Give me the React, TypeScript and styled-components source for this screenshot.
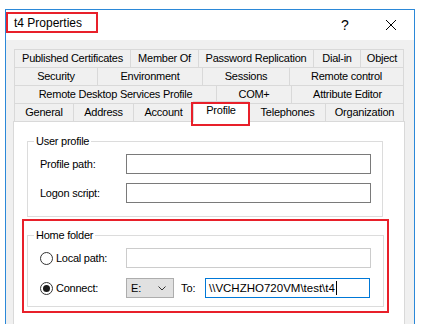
import React from 'react';
import styled, { createGlobalStyle } from 'styled-components';

const GlobalStyle = createGlobalStyle`
  html, body {
    margin: 0;
    padding: 0;
    background: #fff;
    overflow: hidden;
  }
  body {
    font-family: "Liberation Sans", Arial, sans-serif;
    font-size: 11px;
    color: #000;
  }
`;

const Page = styled.div`
  height: 324px;
  box-sizing: border-box;
  padding: 9px 0 0 5px;
  overflow: hidden;
`;

const Window = styled.div`
  width: 410px;
  height: 315px;
  box-sizing: border-box;
  border: 1px solid #2b88d8;
  border-bottom: none;
  background: #f0f0f0;
  display: flex;
  flex-direction: column;
`;

const TitleBar = styled.div`
  height: 30px;
  flex: none;
  background: #fff;
  display: flex;
  align-items: flex-start;
`;

const TitleBox = styled.div`
  margin-top: 2px;
  width: 92px;
  height: 21px;
  box-sizing: border-box;
  border: 2px solid #e8202a;
  padding: 1px 0 0 6px;
  font-size: 12px;
  line-height: 17px;
`;

const Spacer = styled.div`
  flex: 1;
`;

const TitleButton = styled.div`
  width: 46px;
  height: 30px;
  display: flex;
  align-items: center;
  justify-content: center;
  font-size: 14px;
`;

const Body = styled.div`
  flex: 1;
  min-height: 0;
  padding: 9px 9px 0 7px;
  display: flex;
  flex-direction: column;
`;

const TabRows = styled.div`
  margin: 0 1px;
  display: flex;
  flex-direction: column;
`;

const TabRow = styled.div`
  display: flex;
  height: 18px;
`;

const Tab = styled.div<{ $w: number; $selected?: boolean }>`
  width: ${(p) => p.$w}px;
  flex: none;
  box-sizing: border-box;
  height: ${(p) => (p.$selected ? 21 : 18)}px;
  margin-top: ${(p) => (p.$selected ? -2 : 0)}px;
  border-top: 1px solid #d9d9d9;
  border-left: 1px solid #d9d9d9;
  background: ${(p) => (p.$selected ? '#fff' : '#f0f0f0')};
  text-align: center;
  line-height: ${(p) => (p.$selected ? 16 : 17)}px;
  letter-spacing: -0.25px;
  white-space: nowrap;
  position: relative;
  z-index: ${(p) => (p.$selected ? 1 : 0)};
  &:last-child {
    border-right: 1px solid #d9d9d9;
  }
  ${(p) =>
    p.$selected &&
    `
    border-right: 1px solid #d9d9d9;
    &::after {
      content: '';
      position: absolute;
      top: 0;
      left: -3px;
      right: -2px;
      bottom: -4px;
      border: 2px solid #e8202a;
    }
  `}
`;

const Panel = styled.div`
  flex: 1;
  min-height: 0;
  background: #fff;
  border: 1px solid #d9d9d9;
  border-bottom: none;
  padding: 12px 21px 0 13px;
  display: flex;
  flex-direction: column;
`;

const Group = styled.fieldset`
  margin: 0;
  padding: 0;
  min-width: 0;
  border: 1px solid #dcdcdc;
`;

const Legend = styled.legend`
  margin-left: 6px;
  padding: 0 2px;
  line-height: 14px;
  letter-spacing: -0.25px;
`;

const GroupBody = styled.div<{ $gap: number; $bottom: number }>`
  padding: 6px 11px ${(p) => p.$bottom}px 12px;
  display: flex;
  flex-direction: column;
  gap: ${(p) => p.$gap}px;
`;

const Row = styled.div`
  display: flex;
  align-items: center;
  height: 20px;
`;

const Label = styled.div`
  width: 86px;
  flex: none;
  display: flex;
  align-items: center;
  letter-spacing: -0.25px;
`;

const TextBox = styled.div<{ $w: number; $state?: 'disabled' | 'focus' }>`
  width: ${(p) => p.$w}px;
  height: 20px;
  box-sizing: border-box;
  border: 1px solid
    ${(p) => (p.$state === 'disabled' ? '#cccccc' : p.$state === 'focus' ? '#0078d7' : '#7a7a7a')};
  background: #fff;
  padding-left: 3px;
  display: flex;
  align-items: center;
  font-size: 11.5px;
  white-space: nowrap;
`;

const Caret = styled.span`
  display: inline-block;
  width: 1px;
  height: 14px;
  background: #000;
  margin-left: 1px;
`;

const RedBox = styled.div`
  margin: 2px -6px 0 -5px;
  border: 2px solid #e8202a;
  padding: 7px 3px 4px 3px;
`;

const Radio = styled.span<{ $checked?: boolean }>`
  width: 13px;
  height: 13px;
  box-sizing: border-box;
  border-radius: 50%;
  border: 1px solid #333;
  background: #fff;
  margin-right: 3px;
  display: flex;
  align-items: center;
  justify-content: center;
  &::after {
    content: '';
    width: 7px;
    height: 7px;
    border-radius: 50%;
    background: ${(p) => (p.$checked ? '#1a1a1a' : 'transparent')};
  }
`;

const Combo = styled.div`
  width: 48px;
  height: 20px;
  box-sizing: border-box;
  border: 1px solid #adadad;
  background: #e1e1e1;
  display: flex;
  align-items: center;
  justify-content: space-between;
  padding: 0 7px 0 4px;
`;

const ToLabel = styled.div`
  margin-left: 7px;
  width: 24px;
`;

const tabRows: [string, number][][] = [
  [
    ['Published Certificates', 116],
    ['Member Of', 68],
    ['Password Replication', 115],
    ['Dial-in', 47],
    ['Object', 44],
  ],
  [
    ['Security', 83],
    ['Environment', 105],
    ['Sessions', 87],
    ['Remote control', 115],
  ],
  [
    ['Remote Desktop Services Profile', 202],
    ['COM+', 75],
    ['Attribute Editor', 113],
  ],
  [
    ['General', 59],
    ['Address', 60],
    ['Account', 60],
    ['Profile', 56],
    ['Telephones', 76],
    ['Organization', 79],
  ],
];

export default function App() {
  return (
    <Page>
      <GlobalStyle />
      <Window>
        <TitleBar>
          <TitleBox>t4 Properties</TitleBox>
          <Spacer />
          <TitleButton>?</TitleButton>
          <TitleButton>
            <svg width="10" height="10" viewBox="0 0 10 10">
              <path d="M0 0 L10 10 M10 0 L0 10" stroke="#000" strokeWidth="1" />
            </svg>
          </TitleButton>
        </TitleBar>
        <Body>
          <TabRows>
            {tabRows.map((row, i) => (
              <TabRow key={i}>
                {row.map(([name, w]) => (
                  <Tab key={name} $w={w} $selected={name === 'Profile'}>
                    {name}
                  </Tab>
                ))}
              </TabRow>
            ))}
          </TabRows>
          <Panel>
            <Group>
              <Legend>User profile</Legend>
              <GroupBody $gap={9} $bottom={13}>
                <Row>
                  <Label>Profile path:</Label>
                  <TextBox $w={245} />
                </Row>
                <Row>
                  <Label>Logon script:</Label>
                  <TextBox $w={245} />
                </Row>
              </GroupBody>
            </Group>
            <RedBox>
              <Group>
                <Legend>Home folder</Legend>
                <GroupBody $gap={10} $bottom={8}>
                  <Row>
                    <Label>
                      <Radio />
                      Local path:
                    </Label>
                    <TextBox $w={245} $state="disabled" />
                  </Row>
                  <Row>
                    <Label>
                      <Radio $checked />
                      Connect:
                    </Label>
                    <Combo>
                      E:
                      <svg width="8" height="5" viewBox="0 0 8 5">
                        <path d="M0.5 0.5 L4 4 L7.5 0.5" stroke="#333" strokeWidth="1" fill="none" />
                      </svg>
                    </Combo>
                    <ToLabel>To:</ToLabel>
                    <TextBox $w={165} $state="focus">
                      \\VCHZHO720VM\test\t4
                      <Caret />
                    </TextBox>
                  </Row>
                </GroupBody>
              </Group>
            </RedBox>
          </Panel>
        </Body>
      </Window>
    </Page>
  );
}
